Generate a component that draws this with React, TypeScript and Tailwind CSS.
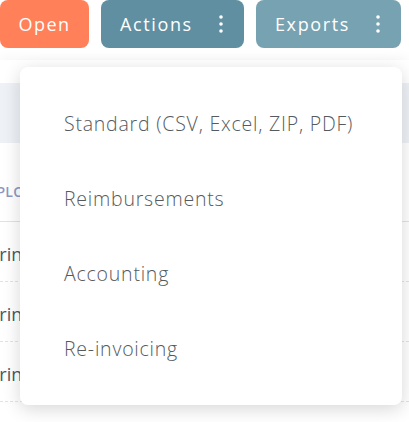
import { useState } from 'react'

const exportOptions = ['Standard (CSV, Excel, ZIP, PDF)', 'Reimbursements', 'Accounting', 'Re-invoicing']

const Dots = () => (
  <svg width="4" height="18" viewBox="0 0 4 18" className="fill-current">
    <circle cx="2" cy="2" r="1.8" />
    <circle cx="2" cy="9" r="1.8" />
    <circle cx="2" cy="16" r="1.8" />
  </svg>
)

export default function App() {
  const [open] = useState(true)

  return (
    <div className="relative w-[409px] h-[422px] overflow-hidden bg-white font-['Open_Sans','Noto_Sans',sans-serif]">
      {/* Toolbar */}
      <div className="flex gap-3 h-12">
        <button className="w-[89px] h-12 rounded-lg bg-[#ff8059] text-white text-[18px] font-medium tracking-[0.08em]">
          Open
        </button>
        <button className="w-[143px] h-12 rounded-lg bg-[#5f8fa1] text-white text-[18px] font-medium tracking-[0.09em] flex items-center justify-between pl-[19px] pr-[21px]">
          <span>Actions</span>
          <Dots />
        </button>
        <button className="w-[145px] h-12 rounded-lg bg-[#77a2b1] text-white text-[18px] font-medium tracking-[0.09em] flex items-center justify-between pl-[19px] pr-[21px]">
          <span>Exports</span>
          <Dots />
        </button>
      </div>

      {/* Table behind */}
      <div className="mt-3 shadow-[0_-4px_10px_rgba(0,0,0,0.03)]">
        <div className="h-[23px]" />
        <div className="h-[60px] bg-[#eef2f6]" />
        <div className="h-[79px] flex items-end pb-[19px] border-b border-[#dfe3e8]">
          <span className="text-[14px] font-semibold text-[#8f98c4] tracking-wide -ml-[25px]">EMPLOYEE</span>
        </div>
        {[0, 1, 2].map((i) => (
          <div key={i} className="h-[60px] flex items-center pt-[6px] border-b border-dashed border-[#dfe2f2]">
            <span className="text-[18px] text-[#3f5a6c] -ml-[17px]">String</span>
          </div>
        ))}
      </div>

      {/* Exports dropdown */}
      {open && (
        <div className="absolute left-[20px] top-[67px] w-[382px] rounded-lg bg-white py-[19px] shadow-[0_4px_18px_rgba(0,0,0,0.16)]">
          {exportOptions.map((label) => (
            <div key={label} className="h-[75px] flex items-center pl-[44px] text-[19.5px] font-light tracking-[0.04em] text-[#555a5e]">
              {label}
            </div>
          ))}
        </div>
      )}
    </div>
  )
}
